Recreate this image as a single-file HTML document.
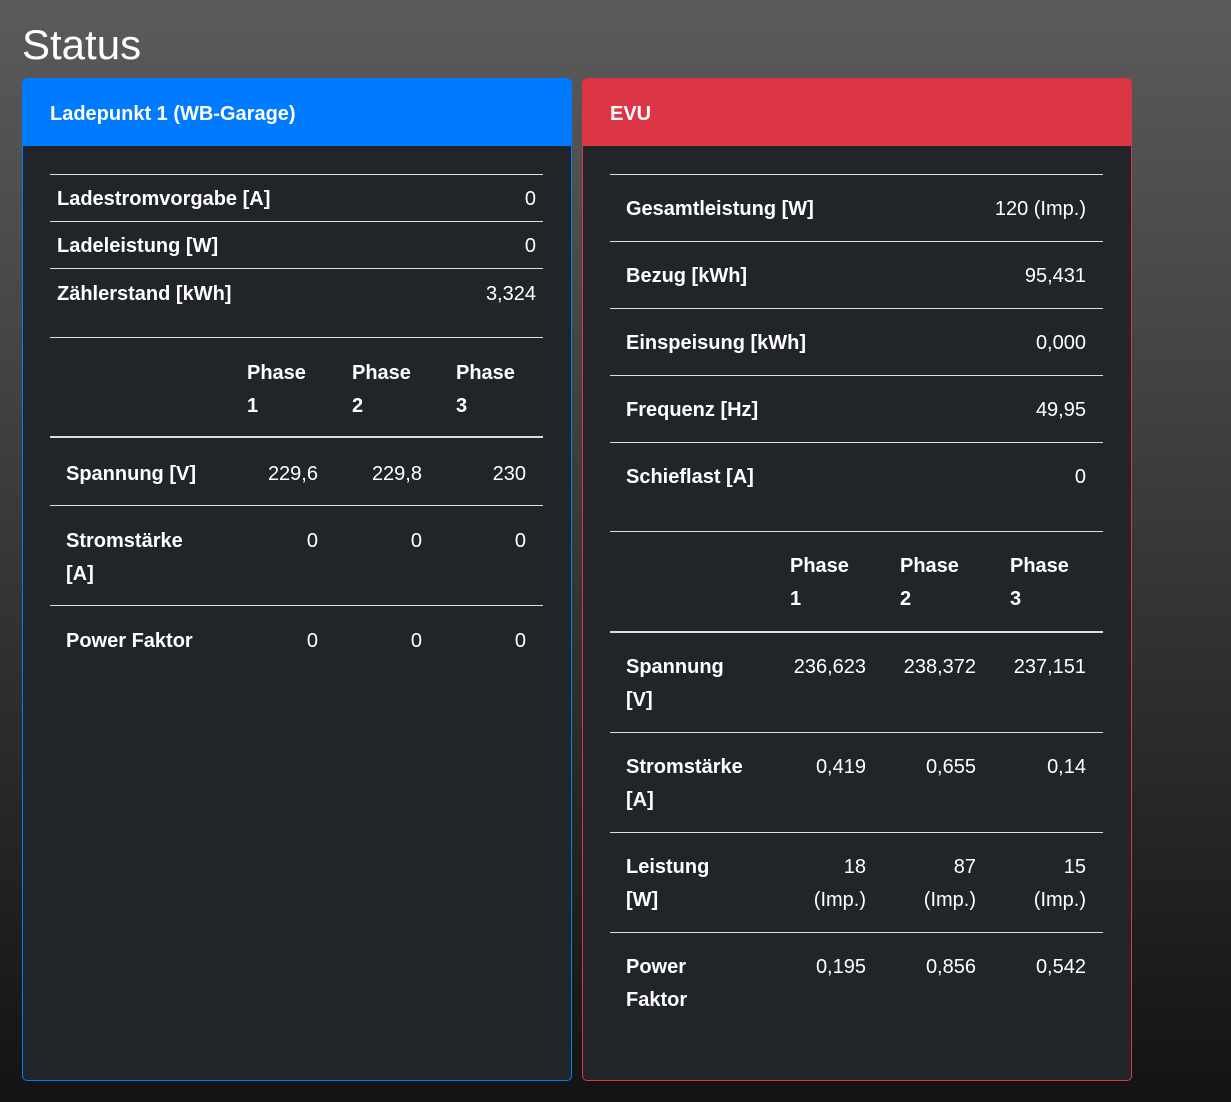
<!DOCTYPE html>
<html><head><meta charset="utf-8"><style>
body{margin:0;width:1231px;height:1102px;overflow:hidden;background:linear-gradient(#5b5b5b,#131313);font-family:"Liberation Sans",sans-serif;color:#fff;position:relative}
.a{position:absolute;line-height:33px;font-size:20px;white-space:nowrap}
.b{font-weight:bold}
.r{text-align:right}
.card{position:absolute;top:78px;height:1003px;width:550px;background:#212429;border-radius:5px;box-sizing:border-box}
.hd{position:absolute;left:0;top:0;right:0;height:67px;border-radius:4px 4px 0 0}
.ln{position:absolute;height:1px;background:#ddd}
.tk{height:2px}
</style></head><body>
<div class="a" style="left:22px;top:19px;font-size:42px;line-height:52px">Status</div>

<div class="card" style="left:22px;border:1px solid #007bff"><div class="hd" style="background:#007bff"></div></div>
<div class="card" style="left:582px;border:1px solid #dc3545"><div class="hd" style="background:#dc3545"></div></div>
<div class="a b" style="left:50px;top:98px">Ladepunkt 1 (WB-Garage)</div>
<div class="a b" style="left:610px;top:98px">EVU</div>

<div class="ln" style="left:50px;width:493px;top:174px"></div>
<div class="ln" style="left:50px;width:493px;top:221px"></div>
<div class="ln" style="left:50px;width:493px;top:268px"></div>
<div class="ln" style="left:50px;width:493px;top:337px"></div>
<div class="ln tk" style="left:50px;width:493px;top:436px"></div>
<div class="ln" style="left:50px;width:493px;top:505px"></div>
<div class="ln" style="left:50px;width:493px;top:605px"></div>
<div class="a b" style="left:57px;top:183px">Ladestromvorgabe [A]</div><div class="a r" style="right:695px;top:183px">0</div>
<div class="a b" style="left:57px;top:230px">Ladeleistung [W]</div><div class="a r" style="right:695px;top:230px">0</div>
<div class="a b" style="left:57px;top:278px">Zählerstand [kWh]</div><div class="a r" style="right:695px;top:278px">3,324</div>
<div class="a b" style="left:247px;top:357px">Phase<br>1</div>
<div class="a b" style="left:352px;top:357px">Phase<br>2</div>
<div class="a b" style="left:456px;top:357px">Phase<br>3</div>
<div class="a b" style="left:66px;top:458px">Spannung [V]</div>
<div class="a r" style="right:913px;top:458px">229,6</div><div class="a r" style="right:809px;top:458px">229,8</div><div class="a r" style="right:705px;top:458px">230</div>
<div class="a b" style="left:66px;top:525px">Stromstärke<br>[A]</div>
<div class="a r" style="right:913px;top:525px">0</div><div class="a r" style="right:809px;top:525px">0</div><div class="a r" style="right:705px;top:525px">0</div>
<div class="a b" style="left:66px;top:625px">Power Faktor</div>
<div class="a r" style="right:913px;top:625px">0</div><div class="a r" style="right:809px;top:625px">0</div><div class="a r" style="right:705px;top:625px">0</div>

<div class="ln" style="left:610px;width:493px;top:174px"></div>
<div class="ln" style="left:610px;width:493px;top:241px"></div>
<div class="ln" style="left:610px;width:493px;top:308px"></div>
<div class="ln" style="left:610px;width:493px;top:375px"></div>
<div class="ln" style="left:610px;width:493px;top:442px"></div>
<div class="ln" style="left:610px;width:493px;top:531px"></div>
<div class="ln tk" style="left:610px;width:493px;top:631px"></div>
<div class="ln" style="left:610px;width:493px;top:732px"></div>
<div class="ln" style="left:610px;width:493px;top:832px"></div>
<div class="ln" style="left:610px;width:493px;top:932px"></div>
<div class="a b" style="left:626px;top:193px">Gesamtleistung [W]</div><div class="a r" style="right:145px;top:193px">120 (Imp.)</div>
<div class="a b" style="left:626px;top:260px">Bezug [kWh]</div><div class="a r" style="right:145px;top:260px">95,431</div>
<div class="a b" style="left:626px;top:327px">Einspeisung [kWh]</div><div class="a r" style="right:145px;top:327px">0,000</div>
<div class="a b" style="left:626px;top:394px">Frequenz [Hz]</div><div class="a r" style="right:145px;top:394px">49,95</div>
<div class="a b" style="left:626px;top:461px">Schieflast [A]</div><div class="a r" style="right:145px;top:461px">0</div>
<div class="a b" style="left:790px;top:550px">Phase<br>1</div>
<div class="a b" style="left:900px;top:550px">Phase<br>2</div>
<div class="a b" style="left:1010px;top:550px">Phase<br>3</div>
<div class="a b" style="left:626px;top:651px">Spannung<br>[V]</div>
<div class="a r" style="right:365px;top:651px">236,623</div><div class="a r" style="right:255px;top:651px">238,372</div><div class="a r" style="right:145px;top:651px">237,151</div>
<div class="a b" style="left:626px;top:751px">Stromstärke<br>[A]</div>
<div class="a r" style="right:365px;top:751px">0,419</div><div class="a r" style="right:255px;top:751px">0,655</div><div class="a r" style="right:145px;top:751px">0,14</div>
<div class="a b" style="left:626px;top:851px">Leistung<br>[W]</div>
<div class="a r" style="right:365px;top:851px">18<br>(Imp.)</div><div class="a r" style="right:255px;top:851px">87<br>(Imp.)</div><div class="a r" style="right:145px;top:851px">15<br>(Imp.)</div>
<div class="a b" style="left:626px;top:951px">Power<br>Faktor</div>
<div class="a r" style="right:365px;top:951px">0,195</div><div class="a r" style="right:255px;top:951px">0,856</div><div class="a r" style="right:145px;top:951px">0,542</div>
</body></html>
